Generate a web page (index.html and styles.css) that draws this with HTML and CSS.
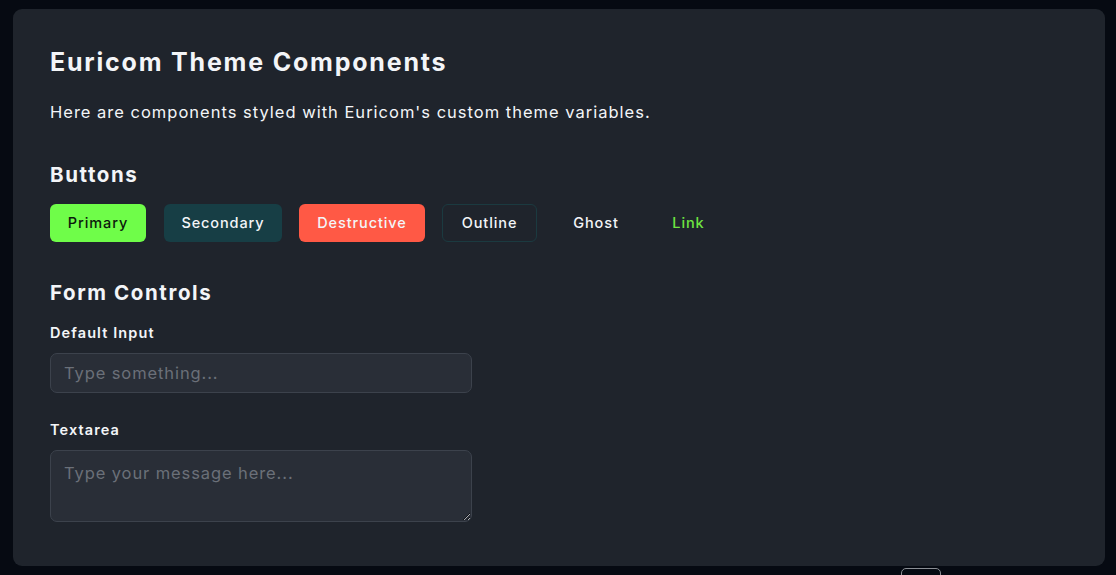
FILE: index.html
```html
<!DOCTYPE html>
<html>
<head>
<meta charset="utf-8">
<link rel="stylesheet" href="styles.css">
</head>
<body>
<main class="card">
  <h1 class="title">Euricom Theme Components</h1>
  <p class="lead">Here are components styled with Euricom's custom theme variables.</p>

  <h2 class="section">Buttons</h2>
  <div class="buttons">
    <button class="btn btn-primary">Primary</button>
    <button class="btn btn-secondary">Secondary</button>
    <button class="btn btn-destructive">Destructive</button>
    <button class="btn btn-outline">Outline</button>
    <button class="btn btn-ghost">Ghost</button>
    <button class="btn btn-link">Link</button>
  </div>

  <h2 class="section section-form">Form Controls</h2>
  <div class="field">
    <label class="label">Default Input</label>
    <input class="input" type="text" placeholder="Type something...">
  </div>
  <div class="field">
    <label class="label">Textarea</label>
    <textarea class="textarea" placeholder="Type your message here..."></textarea>
  </div>
</main>
<div class="bottom-tab"></div>
</body>
</html>
```
FILE: styles.css
```css
html, body {
  margin: 0;
  padding: 0;
  background: #060a12;
  height: 575px;
  overflow: hidden;
}
body {
  padding: 9px 11px 0 13px;
  box-sizing: border-box;
  font-family: Inter, "Noto Sans", sans-serif;
  color: #f3f5f8;
  position: relative;
}
.card {
  background: #1f242c;
  border-radius: 9px;
  height: 557px;
  box-sizing: border-box;
  padding: 38px 37px 0 37px;
  display: flex;
  flex-direction: column;
  align-items: flex-start;
}
.title {
  margin: 0;
  font-size: 25px;
  font-weight: 700;
  line-height: 30px;
  letter-spacing: 1.8px;
}
.lead {
  margin: 23px 0 0 0;
  font-size: 16.5px;
  line-height: 24px;
  font-weight: 400;
  letter-spacing: 1px;
}
.section {
  margin: 38px 0 0 0;
  font-size: 20.5px;
  font-weight: 700;
  line-height: 26px;
  letter-spacing: 1.6px;
}
.section-form {
  margin-top: 38px;
}
.buttons {
  display: flex;
  gap: 18px;
  margin-top: 16px;
}
.btn {
  height: 38px;
  border-radius: 6px;
  font-family: inherit;
  font-size: 14.5px;
  font-weight: 500;
  letter-spacing: 0.9px;
  padding: 0 0 1px 0;
  border: 1px solid transparent;
  cursor: pointer;
  color: #f3f5f8;
  background: transparent;
}
.btn-primary { background: #6ffd49; color: #0c1a0c; width: 96px; }
.btn-secondary { background: #173e45; width: 118px; }
.btn-destructive { background: #ff5945; width: 126px; margin-left: -1px; }
.btn-outline { border-color: #1b3a40; width: 95px; margin-left: -1px; }
.btn-ghost { width: 82px; }
.btn-link { color: #6ee542; width: 67px; }
.field {
  display: flex;
  flex-direction: column;
  margin-top: 17px;
}
.field + .field { margin-top: 27px; }
.label {
  font-size: 14.5px;
  font-weight: 600;
  line-height: 20px;
  margin-bottom: 10px;
  letter-spacing: 1.1px;
}
.input, .textarea {
  width: 422px;
  box-sizing: border-box;
  background: #292e37;
  border: 1px solid #3c424c;
  border-radius: 7px;
  font-family: inherit;
  font-size: 16.5px;
  letter-spacing: 0.9px;
  color: #f3f5f8;
  padding: 0 13px;
  outline: none;
}
.input { height: 40px; }
.textarea {
  height: 72px;
  padding-top: 12px;
  resize: vertical;
  display: block;
}
.input::placeholder, .textarea::placeholder { color: #6b7079; }
.bottom-tab {
  position: absolute;
  left: 901px;
  top: 568px;
  width: 40px;
  height: 14px;
  box-sizing: border-box;
  border: 1px solid #8a8e94;
  border-radius: 5px;
  background: #060a12;
}
```
